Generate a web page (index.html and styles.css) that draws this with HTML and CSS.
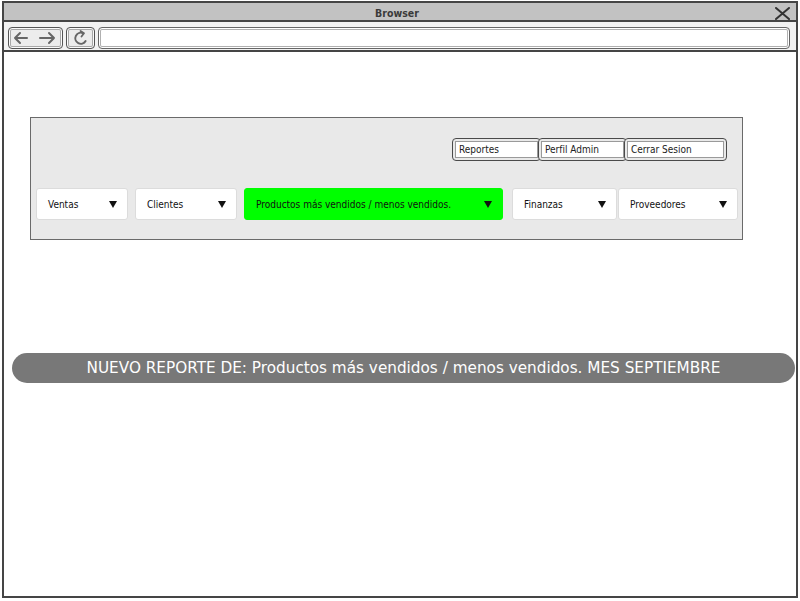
FILE: index.html
```html
<!DOCTYPE html>
<html lang="es">
<head>
<meta charset="utf-8">
<title>Browser</title>
<link rel="stylesheet" href="styles.css">
</head>
<body>
<div class="window">
  <div class="titlebar">
    <span class="title">Browser</span>
    <svg class="close" width="15" height="13" viewBox="0 0 15 13"><path d="M1 1 L14 12 M14 1 L1 12" stroke="#333" stroke-width="2" stroke-linecap="round" fill="none"/></svg>
  </div>
  <div class="toolbar">
    <div class="btn btn-nav">
      <svg width="53" height="20" viewBox="0 0 53 20"><path d="M6 10 H18 M6 10 L11 5 M6 10 L11 15 M31 10 H45 M45 10 L40 5 M45 10 L40 15" stroke="#666" stroke-width="2" stroke-linecap="round" stroke-linejoin="round" fill="none"/></svg>
    </div>
    <div class="btn btn-refresh">
      <svg width="27" height="20" viewBox="0 0 27 20"><path d="M16 5.2 A5.5 5.5 0 1 0 18.6 13" stroke="#666" stroke-width="2" stroke-linecap="round" fill="none"/><path d="M13.5 3 L17 5.3 L14.5 8.5" stroke="#666" stroke-width="1.8" stroke-linecap="round" stroke-linejoin="round" fill="none"/></svg>
    </div>
    <div class="url"></div>
  </div>
  <div class="content">
    <div class="panel">
      <div class="links">
        <div class="seg seg-reportes"><span class="seg-field">Reportes</span></div>
        <div class="seg seg-perfil"><span class="seg-field">Perfil Admin</span></div>
        <div class="seg seg-cerrar"><span class="seg-field">Cerrar Sesion</span></div>
      </div>
      <div class="menus">
        <div class="dd dd-ventas"><span>Ventas</span><span class="caret"></span></div>
        <div class="dd dd-clientes"><span>Clientes</span><span class="caret"></span></div>
        <div class="dd dd-productos"><span>Productos más vendidos / menos vendidos.</span><span class="caret"></span></div>
        <div class="dd dd-finanzas"><span>Finanzas</span><span class="caret"></span></div>
        <div class="dd dd-proveedores"><span>Proveedores</span><span class="caret"></span></div>
      </div>
    </div>
    <div class="banner">NUEVO REPORTE DE: Productos más vendidos / menos vendidos. MES SEPTIEMBRE</div>
  </div>
</div>
</body>
</html>
```

FILE: styles.css
```css
html, body {
  margin: 0;
  padding: 0;
  background: #fff;
}

body {
  font-family: "DejaVu Sans", "Noto Sans", sans-serif;
  color: #222;
}

.window {
  box-sizing: border-box;
  width: 796px;
  height: 597px;
  margin: 1px 0 0 2px;
  border: 2px solid #454545;
  display: flex;
  flex-direction: column;
  background: #fff;
}

.titlebar {
  height: 17px;
  background: #c2c2c2;
  border-bottom: 2px solid #454545;
  display: grid;
  grid-template-columns: 1fr auto 1fr;
  align-items: center;
  padding-right: 6px;
}

.title {
  grid-column: 2;
  font-family: "DejaVu Sans Condensed", "DejaVu Sans", sans-serif;
  font-size: 10.5px;
  font-weight: bold;
  color: #3a3a3a;
  line-height: 17px;
  padding-top: 2px;
}

.close {
  grid-column: 3;
  justify-self: end;
  display: block;
  margin-top: 1px;
}

.toolbar {
  height: 23px;
  padding: 5px 6px 0 4px;
  background: #f2f2f2;
  border-bottom: 2px solid #454545;
  display: flex;
  gap: 3px;
}

.btn {
  box-sizing: border-box;
  height: 22px;
  border: 1px solid #555;
  border-radius: 4px;
  background: #ececec;
  box-shadow: inset 0 0 0 1px #fafafa, inset 0 0 0 2px #a8a8a8;
  display: flex;
  align-items: center;
  justify-content: center;
}

.btn svg {
  display: block;
}

.btn-nav {
  width: 55px;
}

.btn-refresh {
  width: 29px;
}

.url {
  flex: 1;
  box-sizing: border-box;
  height: 22px;
  border: 1px solid #666;
  border-radius: 4px;
  background: #fff;
  box-shadow: inset 0 0 0 1px #fff, inset 0 0 0 2px #b0b0b0;
}

.content {
  flex: 1;
  padding-top: 65px;
}

.panel {
  box-sizing: border-box;
  margin-left: 26px;
  width: 713px;
  height: 123px;
  border: 1px solid #6a6a6a;
  background: #e9e9e9;
  overflow: hidden;
}

.links {
  display: flex;
  justify-content: flex-end;
  margin: 20px 15px 0 0;
  height: 23px;
}

.seg {
  box-sizing: border-box;
  height: 23px;
  border: 1px solid #4a4a4a;
  border-radius: 4px;
  background: #e9e9e9;
  padding: 2px;
  margin-left: -3px;
  display: flex;
}

.seg-reportes {
  width: 89px;
  margin-left: 0;
}

.seg-perfil {
  width: 89px;
}

.seg-cerrar {
  width: 103px;
}

.seg-field {
  flex: 1;
  box-sizing: border-box;
  background: #fff;
  border: 1px solid #9a9a9a;
  font-family: "DejaVu Sans Condensed", "DejaVu Sans", sans-serif;
  font-size: 10px;
  padding-left: 3px;
  display: flex;
  align-items: center;
  color: #222;
}

.menus {
  display: flex;
  margin: 27px 0 0 5px;
  height: 32px;
}

.dd {
  box-sizing: border-box;
  height: 32px;
  background: #fff;
  border: 1px solid #dcdcdc;
  border-radius: 3px;
  display: flex;
  align-items: center;
  justify-content: space-between;
  padding: 0 10px 0 11px;
  font-family: "DejaVu Sans Condensed", "DejaVu Sans", sans-serif;
  font-size: 10px;
  color: #111;
}

.caret {
  width: 0;
  height: 0;
  border-left: 4px solid transparent;
  border-right: 4px solid transparent;
  border-top: 7px solid #111;
}

.dd-ventas {
  width: 92px;
}

.dd-clientes {
  width: 102px;
  margin-left: 7px;
}

.dd-productos {
  width: 259px;
  margin-left: 7px;
  background: #00ff00;
  border-color: #00ff00;
}

.dd-finanzas {
  width: 105px;
  margin-left: 9px;
}

.dd-proveedores {
  width: 120px;
  margin-left: 1px;
}

.banner {
  margin: 113px 1px 0 8px;
  height: 30px;
  border-radius: 15px;
  background: #787878;
  color: #fff;
  font-size: 15.25px;
  display: flex;
  align-items: center;
  justify-content: center;
}
```
